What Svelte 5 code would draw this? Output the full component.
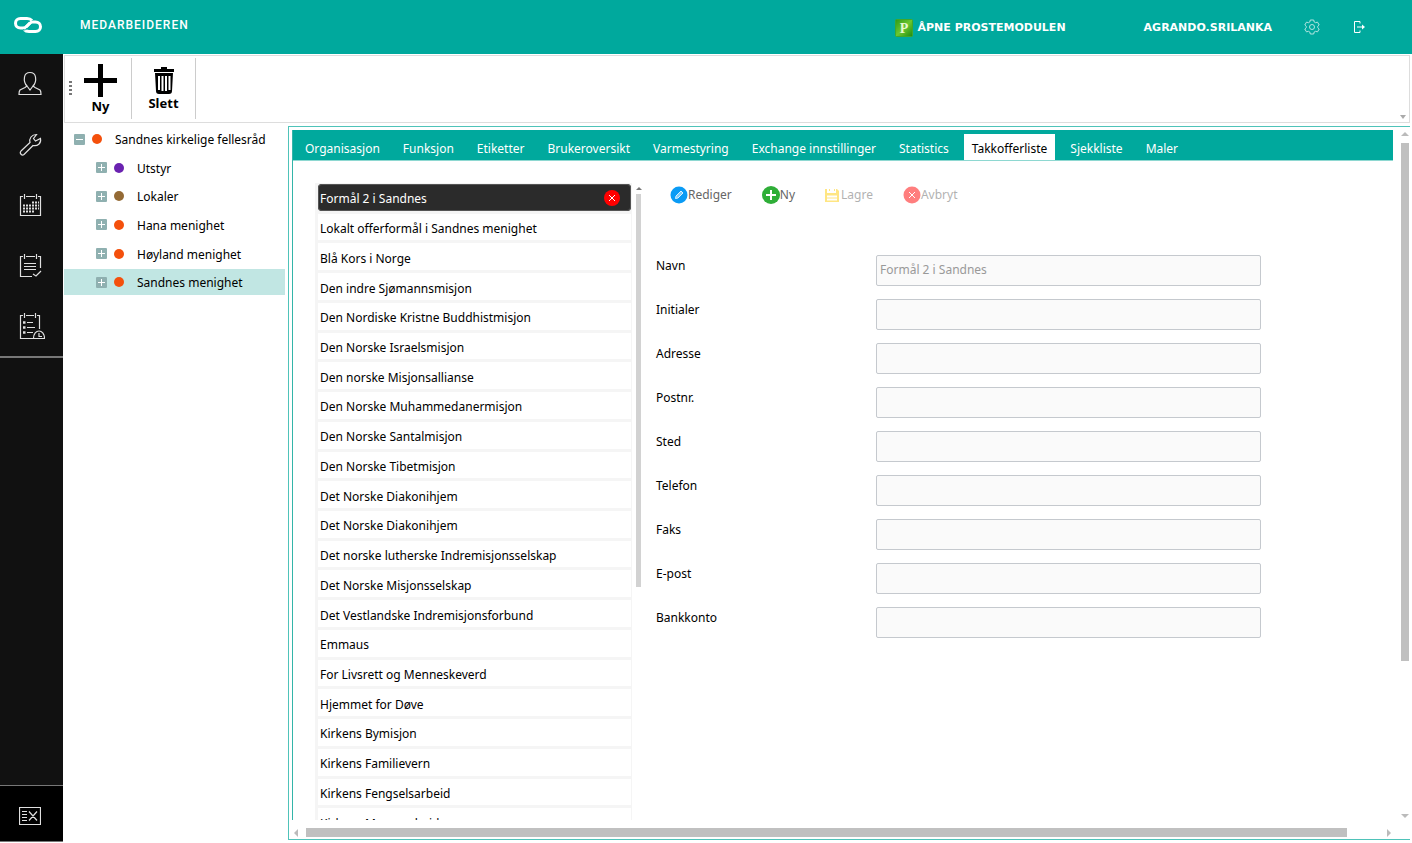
<script>
  const tabs = [
    'Organisasjon',
    'Funksjon',
    'Etiketter',
    'Brukeroversikt',
    'Varmestyring',
    'Exchange innstillinger',
    'Statistics',
    'Takkofferliste',
    'Sjekkliste',
    'Maler'
  ]

  const tree = [
    { name: 'Utstyr', color: '#6a22b0' },
    { name: 'Lokaler', color: '#946a35' },
    { name: 'Hana menighet', color: '#f4500c' },
    { name: 'Høyland menighet', color: '#f4500c' },
    { name: 'Sandnes menighet', color: '#f4500c' }
  ]

  const purposes = [
    'Formål 2 i Sandnes',
    'Lokalt offerformål i Sandnes menighet',
    'Blå Kors i Norge',
    'Den indre Sjømannsmisjon',
    'Den Nordiske Kristne Buddhistmisjon',
    'Den Norske Israelsmisjon',
    'Den norske Misjonsallianse',
    'Den Norske Muhammedanermisjon',
    'Den Norske Santalmisjon',
    'Den Norske Tibetmisjon',
    'Det Norske Diakonihjem',
    'Det Norske Diakonihjem',
    'Det norske lutherske Indremisjonsselskap',
    'Det Norske Misjonsselskap',
    'Det Vestlandske Indremisjonsforbund',
    'Emmaus',
    'For Livsrett og Menneskeverd',
    'Hjemmet for Døve',
    'Kirkens Bymisjon',
    'Kirkens Familievern',
    'Kirkens Fengselsarbeid',
    'Kirkens Mannsarbeid'
  ]

  const fields = ['Navn', 'Initialer', 'Adresse', 'Postnr.', 'Sted', 'Telefon', 'Faks', 'E-post', 'Bankkonto']

  let activeTab = $state('Takkofferliste')
  let activeNode = $state('Sandnes menighet')
  let selected = $state(0)
</script>

<div class="app">
  <header>
    <svg class="logo" width="30" height="18" viewBox="0 0 30 18" fill="none" stroke-width="3">
      <g stroke="#fff">
        <path d="M19 4.500C17.500 2.800 16 2.500 14 2.500H7.500C4.500 2.500 2.500 4.500 2.500 7.200S4.500 12 7.500 12H10C11.500 12 12.500 11.500 13.500 10.500L17 7" />
        <path d="M11 13.500C12.500 15.200 14 15.500 16 15.500H22.500C25.500 15.500 27.500 13.500 27.500 10.800S25.500 6 22.500 6H20C18.500 6 17.500 6.500 16.500 7.500L13 11" />
      </g>
      <path d="M10 14C14 14 14.500 12 20 8" stroke="#00a99d" stroke-width="1" />
    </svg>
    <span class="title">MEDARBEIDEREN</span>
    <a class="link module" href="#proste">
      <svg width="18" height="18" viewBox="0 0 18 18">
        <defs>
          <linearGradient id="leaf" x1="0" y1="0" x2="1" y2="1">
            <stop offset="0" stop-color="#2c9a17" />
            <stop offset="0.5" stop-color="#6cc72f" />
            <stop offset="1" stop-color="#1c8a10" />
          </linearGradient>
        </defs>
        <rect x="0.500" y="0.500" width="17" height="17" rx="1" fill="url(#leaf)" stroke="#3fa82a" />
        <text x="9" y="14" text-anchor="middle" font-family="Liberation Serif, serif" font-weight="bold" font-size="14" fill="#e4f8cf">P</text>
      </svg>
      ÅPNE PROSTEMODULEN
    </a>
    <a class="link user" href="#user">AGRANDO.SRILANKA</a>
    <button class="head-btn" aria-label="Innstillinger">
      <svg width="16" height="16" viewBox="0 0 16 16" fill="none" stroke="#b4e5e1">
        <path d="M6.300 1h3.400l.5 2 1.300.7 2-.6 1.700 2.900-1.500 1.400v1.200l1.500 1.400-1.700 2.900-2-.6-1.300.7-.5 2H6.300l-.5-2-1.300-.7-2 .6L.8 10l1.500-1.400V7.400L.8 6l1.700-2.900 2 .6L5.800 3z" stroke-linejoin="round" />
        <circle cx="8" cy="8" r="2.500" />
      </svg>
    </button>
    <button class="head-btn" aria-label="Logg ut">
      <svg width="14" height="14" viewBox="0 0 14 14" fill="none" stroke="#fff">
        <path d="M8 3.500V1.500H2.500V12.500H8V10.500M5 7H11" />
        <path d="M10 4.500L13 7L10 9.500Z" fill="#fff" stroke="none" />
      </svg>
    </button>
  </header>

  <div class="body">
    <aside>
      <nav>
        <button aria-label="Personer">
          <svg width="30" height="30" viewBox="0 0 30 30">
            <path d="M12 17C9.500 14.500 9 11 9.500 8C10 5 12 3.500 15 3.500S20 5 20.500 8C21 11 20.500 14.500 18 17L20 18.500L25 21C26 22 26 24 26 25.500H4C4 24 4 22 5 21L10 18.500ZM12 17L15 21L18 17" />
          </svg>
        </button>
        <button aria-label="Verktøy">
          <svg width="30" height="30" viewBox="0 0 30 30">
            <path d="M6 21L15 12.500C14 8.500 16.500 4.500 21.500 4.500L18.500 8.500L20.500 11L25.500 8.500C26.500 13.500 22.500 16.500 18 15.500L9 24.500C7 26 4 23.500 6 21Z" />
          </svg>
        </button>
        <button aria-label="Kalender">
          <svg width="30" height="30" viewBox="0 0 30 30">
            <path d="M8 6.500H5.500V25.500H25.500V6.500H23M11 6.500H20M9.500 4V9M21.500 4V9" />
            <path d="M17 12.500H24M8 15.500H24M8 18.500H24M8 21.500H20" stroke-width="2" stroke-dasharray="2 1" />
          </svg>
        </button>
        <button aria-label="Oppgaver">
          <svg width="30" height="30" viewBox="0 0 30 30">
            <path d="M8 6.500H5.500V26.500H17M25.500 18V6.500H23M11 6.500H20M9.500 4V9M21.500 4V9" />
            <path d="M9 13.500H21M9 16.500H21M9 19.500H21M18 24L21 26L26 21" />
          </svg>
        </button>
        <button aria-label="Tidsplan">
          <svg width="30" height="30" viewBox="0 0 30 30">
            <path d="M8 4.500H5.500V27.500H18M24.500 18V4.500H22M11 4.500H19M9.500 2V7M20.500 2V7M12 11.500H18M12 16.500H20M12 21.500H18M18.500 27.500C18.500 17.500 29.500 17.500 29.500 27.500ZM24 22V25.500H27" />
            <path d="M8 11.500H10.500M8 16.500H10.500M8 21.500H10.500" stroke-width="2.500" />
          </svg>
        </button>
      </nav>
      <button class="collapse" aria-label="Skjul meny">
        <svg width="22" height="20" viewBox="0 0 22 20">
          <path d="M0.500 1.500H21.500V18.500H0.500ZM3 5.500H8M3 8.500H8M3 11.500H8M3 14.500H8M10 5.500L18 14.500M18 5.500L10 14.500" />
        </svg>
      </button>
    </aside>

    <main>
      <div class="toolbar">
        <span class="grip"></span>
        <button class="tool new">
          <svg width="33" height="33" viewBox="0 0 33 33" stroke="#000" stroke-width="5">
            <path d="M16.500 0V33M0 16.500H33" />
          </svg>
          Ny
        </button>
        <button class="tool">
          <svg width="22" height="27" viewBox="0 0 22 27">
            <path d="M8 0h6v2h7v3H1V2h7z" />
            <path d="M2 6h18l-1 18q0 3-3 3H6q-3 0-3-3z" />
            <path d="M6 9v14M9.500 9v15M13 9v15M16.500 9v14" stroke="#fff" stroke-width="2" />
          </svg>
          Slett
        </button>
        <span class="overflow"></span>
      </div>

      <div class="content">
        <ul class="tree">
          <li>
            <button class="node root">
              <svg class="toggle" width="11" height="11" viewBox="0 0 11 11"><path d="M2 5.500H9" /></svg>
              <span class="dot" style="background: #f4500c"></span>
              <span class="name">Sandnes kirkelige fellesråd</span>
            </button>
          </li>
          {#each tree as node}
            <li>
              <button class="node" class:active={node.name === activeNode} onclick={() => (activeNode = node.name)}>
                <svg class="toggle" width="11" height="11" viewBox="0 0 11 11"><path d="M2 5.500H9M5.500 2V9" /></svg>
                <span class="dot" style="background: {node.color}"></span>
                <span class="name">{node.name}</span>
              </button>
            </li>
          {/each}
        </ul>

        <section class="panel">
          <div class="view">
            <div class="tabs">
              {#each tabs as tab}
                <button class="tab" class:active={tab === activeTab} onclick={() => (activeTab = tab)}>{tab}</button>
              {/each}
            </div>

            <div class="page">
              <ul class="list">
                {#each purposes as purpose, i}
                  <li class:selected={i === selected}>
                    <button class="purpose" onclick={() => (selected = i)}>{purpose}</button>
                    {#if i === selected}
                      <button class="remove" aria-label="Slett {purpose}">
                        <svg width="16" height="16" viewBox="0 0 16 16">
                          <circle cx="8" cy="8" r="8" fill="#f00" />
                          <path d="M5 5L11 11M11 5L5 11" stroke="#fff" />
                        </svg>
                      </button>
                    {/if}
                  </li>
                {/each}
              </ul>
              <div class="list-scroll">
                <span class="arrow up"></span>
                <span class="thumb"></span>
              </div>

              <div class="details">
                <div class="actions">
                  <button>
                    <svg width="18" height="18" viewBox="0 0 18 18">
                      <circle cx="9" cy="9" r="8.500" fill="#0a9bf5" />
                      <path d="M5.500 12.500L6 10L11 5L13 7L8 12Z" fill="#7fccfa" stroke="#d8f0ff" />
                    </svg>Rediger
                  </button>
                  <button>
                    <svg width="18" height="18" viewBox="0 0 18 18">
                      <circle cx="9" cy="9" r="9" fill="#2fae38" />
                      <path d="M9 4V14M4 9H14" stroke="#fff" stroke-width="2" />
                    </svg>Ny
                  </button>
                  <button class="save" disabled>
                    <svg width="14" height="14" viewBox="0 0 14 14">
                      <path d="M0 1H2V5H11V1H12L14 3V14H0ZM4 1H5V3H4ZM9 1H10V3H9Z" fill="#ffcf0a" />
                      <path d="M2 8.500H12M2 11.500H12" stroke="#fff" stroke-width="2" />
                    </svg>Lagre
                  </button>
                  <button disabled>
                    <svg width="18" height="18" viewBox="0 0 18 18">
                      <circle cx="9" cy="9" r="8.500" fill="#f00" />
                      <path d="M6 6L12 12M12 6L6 12" stroke="#fff" />
                    </svg>Avbryt
                  </button>
                </div>

                <form>
                  {#each fields as field, i}
                    <label for="field-{i}">{field}</label>
                    <input id="field-{i}" type="text" value={i === 0 ? purposes[selected] : ''} disabled />
                  {/each}
                </form>
              </div>
            </div>
          </div>

          <div class="scroll-y">
            <span class="arrow up"></span>
            <div class="track"><span class="thumb"></span></div>
            <span class="arrow down"></span>
          </div>
          <div class="scroll-x">
            <span class="arrow left"></span>
            <div class="track"><span class="thumb"></span></div>
            <span class="arrow right"></span>
          </div>
        </section>
      </div>
    </main>
  </div>
</div>

<style>
  :global(body) {
    background: #fff;
  }

  .app {
    display: flex;
    flex-direction: column;
    height: 100vh;
    font-family: 'Noto Sans', 'Open Sans', sans-serif;
    font-size: 12px;
    line-height: 18px;
    color: #000;
    overflow: hidden;
  }

  .app * {
    box-sizing: border-box;
  }

  button {
    font: inherit;
    color: inherit;
    background: none;
    border: none;
    padding: 0;
    cursor: pointer;
    white-space: nowrap;
  }

  svg {
    flex: none;
    display: block;
  }

  ul {
    list-style: none;
    margin: 0;
    padding: 0;
  }

  header {
    display: flex;
    align-items: center;
    flex: none;
    height: 54px;
    padding: 0 46px 0 13px;
    background: #00a99d;
    color: #fff;
  }

  .logo {
    margin-bottom: 4px;
  }

  .title {
    flex: 1;
    padding: 0 0 4px 37px;
    font-family: Roboto, sans-serif;
    font-weight: 500;
    letter-spacing: 1px;
  }

  .link {
    display: flex;
    align-items: center;
    gap: 5px;
    padding-top: 1px;
    color: #fff;
    text-decoration: none;
    font-family: 'DejaVu Sans', sans-serif;
    font-size: 11px;
    font-weight: bold;
  }

  .user {
    margin: 0 32px 0 78px;
  }

  .head-btn + .head-btn {
    margin-left: 32px;
  }

  .body {
    display: flex;
    flex: 1;
    min-height: 0;
  }

  aside {
    display: flex;
    flex-direction: column;
    justify-content: space-between;
    flex: none;
    width: 63px;
    margin-bottom: 1px;
    background: #111;
    border-bottom: 1px solid #777;
  }

  aside svg {
    fill: none;
    stroke: #e0e0e0;
    stroke-width: 1.2;
  }

  nav {
    display: grid;
    grid-auto-rows: 1fr;
    min-height: 304px;
    border-bottom: 2px solid #777;
  }

  aside button {
    display: flex;
    align-items: center;
    justify-content: center;
    padding-right: 3px;
  }

  .collapse {
    height: 56px;
    padding-top: 4px;
    background: #000;
    border-top: 1px solid #777;
  }

  main {
    display: flex;
    flex-direction: column;
    flex: 1;
    min-width: 0;
    padding: 1px 2px 3px 1px;
  }

  .toolbar {
    display: flex;
    flex: none;
    height: 68px;
    padding: 2px 0 3px 4px;
    border: 1px solid #ddd;
    margin-bottom: 3px;
  }

  .grip {
    align-self: center;
    width: 3px;
    height: 15px;
    background: repeating-linear-gradient(#777 0 2px, transparent 2px 4px);
  }

  .tool {
    display: flex;
    flex-direction: column;
    align-items: center;
    justify-content: center;
    width: 64px;
    padding-top: 2px;
    border-right: 1px solid #ccc;
    font-size: 13px;
    font-weight: bold;
  }

  .tool.new {
    width: 60px;
    padding-right: 2px;
  }

  .overflow {
    align-self: flex-end;
    margin: 0 3px 0 auto;
    border: 3px solid transparent;
    border-top: 4px solid #aaa;
    border-bottom: none;
  }

  .content {
    display: flex;
    flex: 1;
    min-height: 0;
  }

  .tree {
    display: grid;
    align-content: start;
    grid-auto-rows: minmax(27px, 1fr);
    flex: none;
    width: 221px;
    height: 172px;
    margin-right: 3px;
  }

  .node {
    display: flex;
    align-items: center;
    width: 100%;
    height: 26px;
    padding-left: 32px;
  }

  .node.root {
    padding-left: 10px;
  }

  .node.active {
    background: #c1e6e3;
  }

  .name {
    padding-top: 2px;
  }

  .toggle {
    border-radius: 1px;
    background: #8fb0b0;
    stroke: #fff;
  }

  .dot {
    width: 10px;
    height: 10px;
    margin: 0 13px 0 7px;
    border-radius: 50%;
  }

  .panel {
    display: grid;
    grid-template-columns: minmax(0, 1fr) 17px;
    grid-template-rows: minmax(0, 1fr) 19px;
    flex: 1;
    min-width: 0;
    padding: 3px 0 0 3px;
    border: 1px solid #4fc3b9;
    border-right: none;
  }

  .view {
    display: flex;
    flex-direction: column;
    min-height: 0;
    border-left: 1px solid #33b5a9;
    overflow: hidden;
  }

  .tabs {
    display: flex;
    align-items: flex-end;
    gap: 7px;
    flex: none;
    height: 31px;
    padding: 0 4px;
    background: #00a99d;
    border-bottom: 1px solid #8ed8d1;
  }

  .tab {
    height: 26px;
    padding: 4px 8px 0;
    color: #fff;
  }

  .tab.active {
    background: #fff;
    color: #000;
  }

  .page {
    display: flex;
    align-items: flex-start;
    flex: 1;
    min-height: 0;
    padding: 22px 0 0 22px;
  }

  .list {
    display: grid;
    grid-auto-rows: 1fr;
    gap: 3px;
    flex: none;
    width: 317px;
    min-height: 652px;
    padding: 1px 1px 0 3px;
    background: #f5f5f5;
  }

  .list li {
    display: flex;
    align-items: center;
    background: #fff;
  }

  .list li.selected {
    background: #2b2b2b;
    border-radius: 4px;
    color: #fff;
    box-shadow: inset 0 0 0 1px #555;
  }

  .purpose {
    flex: 1;
    padding: 4px 2px 0;
    text-align: left;
  }

  .remove {
    padding-top: 1px;
    margin-right: 11px;
  }

  .list-scroll {
    display: flex;
    flex-direction: column;
    align-items: center;
    gap: 4px;
    width: 5px;
    height: 404px;
    margin: 0 15px 0 4px;
    padding-top: 4px;
  }

  .thumb {
    background: #c0c0c0;
  }

  .list-scroll .thumb {
    flex: 1;
    width: 5px;
    background: #d2d2d2;
  }

  .arrow {
    flex: none;
    border: 4px solid transparent;
  }

  .up {
    border-top: none;
    border-bottom-color: #bbb;
  }

  .down {
    border-bottom: none;
    border-top-color: #bbb;
  }

  .left {
    border-left: none;
    border-right-color: #bbb;
  }

  .right {
    border-right: none;
    border-left-color: #bbb;
  }

  .list-scroll .up {
    border-width: 0 3px 3px;
    border-bottom-color: #777;
  }

  .details {
    flex: 1;
    min-width: 0;
  }

  .actions {
    display: flex;
    gap: 30px;
    padding: 3px 0 0 14px;
    color: #666;
  }

  .actions button {
    display: flex;
    align-items: center;
  }

  .actions button:disabled {
    opacity: 0.5;
  }

  .actions .save {
    gap: 2px;
  }

  form {
    display: grid;
    grid-template-columns: 220px minmax(0, 385px);
    row-gap: 13px;
    padding: 51px 12px 0 0;
  }

  label {
    padding-top: 2px;
  }

  input {
    height: 31px;
    padding: 0 3px 3px;
    font: inherit;
    color: #999;
    background: #fafafa;
    border: 1px solid #c5c9ce;
    border-radius: 2px;
  }

  .scroll-y {
    display: flex;
    flex-direction: column;
    align-items: center;
    gap: 7px;
    padding: 2px 1px 2px 8px;
  }

  .scroll-y .track,
  .scroll-x .track {
    display: flex;
    flex: 1;
  }

  .scroll-y .thumb {
    width: 8px;
    height: 78%;
  }

  .scroll-x {
    display: flex;
    align-items: center;
    gap: 8px;
    padding: 6px 19px 0 2px;
    grid-column: 1 / -1;
  }

  .scroll-x .thumb {
    width: 97%;
    height: 9px;
  }
</style>
